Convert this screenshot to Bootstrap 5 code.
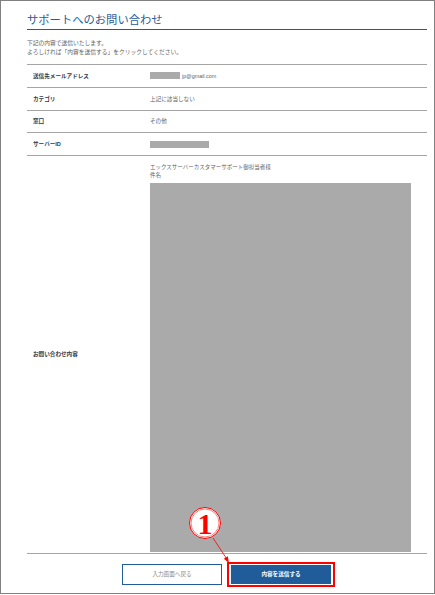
<!DOCTYPE html>
<html lang="ja">
<head>
<meta charset="utf-8">
<title>サポートへのお問い合わせ</title>
<link href="https://cdn.jsdelivr.net/npm/bootstrap@5.3.0/dist/css/bootstrap.min.css" rel="stylesheet">
<style>
html,body{margin:0;height:595px;overflow:hidden;background:#fff}
body{font-family:"Liberation Sans","Noto Sans CJK JP",sans-serif;color:#555}
.frame{position:relative;width:435px;height:594px;border:1px solid #808080;padding:0 7px 0 26px}
.head-title{font-size:11.3px;line-height:14px;color:#1f5c99;font-weight:400;margin:0;padding:12px 0 2px;border-bottom:1px solid #1f5c99}
.intro{font-size:5.75px;line-height:9px;color:#5f5f5f;margin:0;padding:9px 0 7px}
.info-row{border-top:1px solid #a5a5a5;font-size:5.6px;color:#5f5f5f;height:23px}
.info-row.r3{height:22px}
.info-row.big{height:398px}
.lbl{width:123px;padding-left:6px;font-weight:700;color:#2f3a4a}
.grey-a{width:30px;height:7px;background:#aaa;margin-right:2px}
.mail{font-size:5.4px}
.grey-b{width:59px;height:7px;background:#aaa}
.grey-c{width:261px;height:369px;background:#aaa;margin-top:4px}
.msg{line-height:8px;padding-top:7px;font-size:5.5px}
.foot{border-top:1px solid #a5a5a5;gap:5px;padding:10px 0 0 3px}
.btn-back,.btn-send{font-size:5.6px;border-radius:0;padding:0;display:flex;align-items:center;justify-content:center;font-weight:700}
.btn-back{width:100px;height:21px;border:1px solid #1f5c99;background:#fff;color:#888;font-weight:400}
.btn-send{width:100px;height:19px;background:#1f5c99;color:#fff;border:0}
.send-wrap{padding:1px 2px;border:2px solid #f00;background:#fff;margin-top:-2px}
.callout{position:absolute;left:185px;top:505px;width:50px;height:60px;overflow:visible}
</style>
</head>
<body>
<div class="frame">
  <h1 class="head-title">サポートへのお問い合わせ</h1>
  <p class="intro">下記の内容で送信いたします。<br>よろしければ「内容を送信する」をクリックしてください。</p>
  <div class="info-row d-flex align-items-center"><div class="lbl">送信先メールアドレス</div><div class="d-flex align-items-center"><span class="grey-a"></span><span class="mail">jp@gmail.com</span></div></div>
  <div class="info-row d-flex align-items-center"><div class="lbl">カテゴリ</div><div>上記に該当しない</div></div>
  <div class="info-row r3 d-flex align-items-center"><div class="lbl">窓口</div><div>その他</div></div>
  <div class="info-row d-flex align-items-center"><div class="lbl">サーバーID</div><div class="grey-b"></div></div>
  <div class="info-row big d-flex align-items-center"><div class="lbl">お問い合わせ内容</div><div class="msg align-self-start">エックスサーバーカスタマーサポート御担当者様<br>件名<div class="grey-c"></div></div></div>
  <div class="foot d-flex justify-content-center">
    <button type="button" class="btn btn-back">入力画面へ戻る</button>
    <div class="send-wrap"><button type="button" class="btn btn-send">内容を送信する</button></div>
  </div>
  <svg class="callout" viewBox="0 0 50 60" aria-hidden="true">
    <circle cx="19" cy="17" r="15.500" fill="#fff" stroke="#f00" stroke-width="1"/>
    <circle cx="19" cy="17" r="14" fill="none" stroke="#f00" stroke-width=".5"/>
    <text x="19" y="27.500" text-anchor="middle" font-family="Liberation Serif" font-weight="700" font-size="30" fill="#f00">1</text>
    <path d="M27 32 41.500 54" stroke="#f00" stroke-width=".8" fill="none"/>
    <path d="M43 57 37.800 52.800 41.800 50.200Z" fill="#f00"/>
  </svg>
</div>
</body>
</html>
